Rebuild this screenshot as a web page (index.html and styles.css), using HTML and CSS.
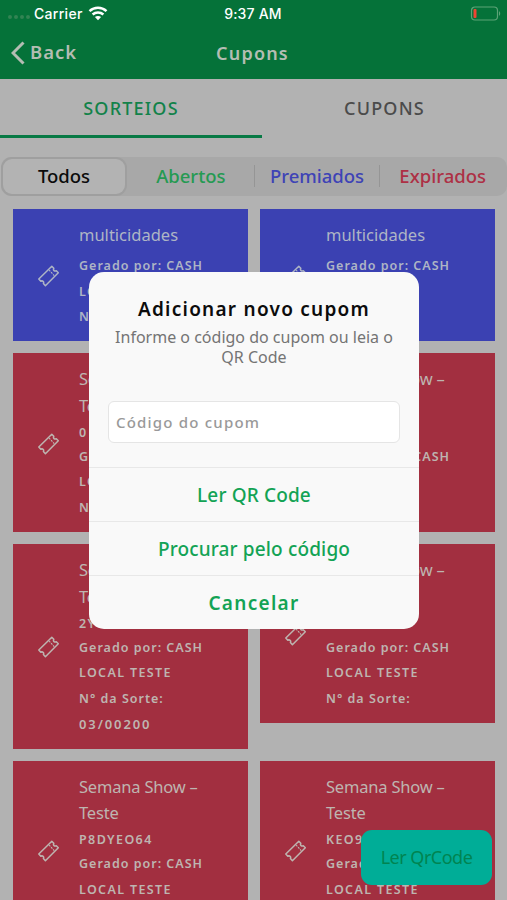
FILE: index.html
```
<!DOCTYPE html>
<html lang="pt-BR">
<head>
  <meta charset="UTF-8">
  <meta name="viewport" content="width=device-width, initial-scale=1.0">
  <title>Cupons</title>
  <link rel="stylesheet" href="styles.css">
</head>
<body>
  <svg class="symbols" width="0" height="0">
    <symbol id="ticket" viewBox="0 0 22 22">
      <path d="M14.8 1.2l2 2.1c-1 1.8.8 3.5 2.5 2.4l2 2.1L8.4 20.8l-2-2.2c.9-1.8-.9-3.5-2.6-2.3l-2-2.3z" />
      <path class="perforation" d="M12 5l5.2 5.6" />
    </symbol>
  </svg>

  <div class="app">
    <header class="header">
      <div class="status-bar">
        <div class="carrier">
          <span class="signal"><i></i><i></i><i></i><i></i></span>
          <span class="carrier-name">Carrier</span>
          <svg class="wifi" width="20" height="15" viewBox="0 0 20 15">
            <path d="M1.5 5.2c4.9-4.5 12.1-4.5 17 0M4.6 8.5c3.1-2.8 7.7-2.8 10.8 0" />
            <path class="wifi-dot" d="M10 14.3l-3.1-3.2c1.8-1.6 4.4-1.6 6.2 0z" />
          </svg>
        </div>
        <span class="time">9:37 AM</span>
        <svg class="battery" width="31" height="15" viewBox="0 0 31 15">
          <rect class="battery-case" x="1.5" y="1" width="26" height="13" rx="3.5" />
          <rect class="battery-level" x="3.5" y="3" width="3" height="9" rx="1" />
          <path class="battery-tip" d="M29 5.2c1.6.6 1.6 4 0 4.6z" />
        </svg>
      </div>
      <div class="nav-bar">
        <div class="back">
          <svg width="14" height="24" viewBox="0 0 14 24"><path d="M12.5 1.5L2 12l10.5 10.5" /></svg>
          <span>Back</span>
        </div>
        <h1 class="nav-title">Cupons</h1>
      </div>
    </header>

    <nav class="tabs">
      <div class="tab active"><span>SORTEIOS</span></div>
      <div class="tab"><span>CUPONS</span></div>
    </nav>

    <div class="segments">
      <div class="segment selected"><span>Todos</span></div>
      <div class="segment open"><span>Abertos</span></div>
      <div class="segment awarded"><span>Premiados</span></div>
      <div class="segment expired"><span>Expirados</span></div>
    </div>

    <main class="coupons">
      <div class="coupon blue">
        <svg class="ticket"><use href="#ticket" /></svg>
        <div class="info">
          <h2>multicidades</h2>
          <p>Gerado por: CASH</p><p class="place">LOCAL TESTE</p><p>N° da Sorte:</p>
        </div>
      </div>
      <div class="coupon blue">
        <svg class="ticket"><use href="#ticket" /></svg>
        <div class="info">
          <h2>multicidades</h2>
          <p>Gerado por: CASH</p><p class="place">LOCAL TESTE</p><p>N° da Sorte:</p>
        </div>
      </div>

      <div class="coupon">
        <svg class="ticket"><use href="#ticket" /></svg>
        <div class="info">
          <h2>Semana Show –<br>Teste</h2>
          <p class="code">0</p>
          <p>Gerado por: CASH</p><p class="place">LOCAL TESTE</p><p>N° da Sorte:</p>
        </div>
      </div>
      <div class="coupon">
        <svg class="ticket"><use href="#ticket" /></svg>
        <div class="info">
          <h2>Semana Show –<br>Teste</h2>
          <p class="code">0</p>
          <p>Gerado por: CASH</p><p class="place">LOCAL TESTE</p><p>N° da Sorte:</p>
        </div>
      </div>

      <div class="coupon">
        <svg class="ticket"><use href="#ticket" /></svg>
        <div class="info">
          <h2>Semana Show –<br>Teste</h2>
          <p class="code">2Y</p>
          <p>Gerado por: CASH</p><p class="place">LOCAL TESTE</p><p>N° da Sorte:</p><p class="number">03/00200</p>
        </div>
      </div>
      <div class="coupon">
        <svg class="ticket"><use href="#ticket" /></svg>
        <div class="info">
          <h2>Semana Show –<br>Teste</h2>
          <p class="code">0</p>
          <p>Gerado por: CASH</p><p class="place">LOCAL TESTE</p><p>N° da Sorte:</p>
        </div>
      </div>

      <div class="coupon">
        <svg class="ticket"><use href="#ticket" /></svg>
        <div class="info">
          <h2>Semana Show –<br>Teste</h2>
          <p class="code">P8DYEO64</p>
          <p>Gerado por: CASH</p><p class="place">LOCAL TESTE</p>
        </div>
      </div>
      <div class="coupon">
        <svg class="ticket"><use href="#ticket" /></svg>
        <div class="info">
          <h2>Semana Show –<br>Teste</h2>
          <p class="code">KEO9</p>
          <p>Gerado por: CASH</p><p class="place">LOCAL TESTE</p>
        </div>
      </div>
    </main>

    <button class="scan-button"><span>Ler QrCode</span></button>

    <div class="dialog">
      <div class="dialog-body">
        <h2 class="dialog-title">Adicionar novo cupom</h2>
        <p class="dialog-text"><span>Informe o código do cupom ou leia o</span><br>QR Code</p>
        <div class="code-input"><span>Código do cupom</span></div>
      </div>
      <button class="action"><span>Ler QR Code</span></button>
      <button class="action"><span>Procurar pelo código</span></button>
      <button class="action cancel"><span>Cancelar</span></button>
    </div>
  </div>
</body>
</html>
```
FILE: styles.css
```
* {
  box-sizing: border-box;
}
body {
  margin: 0;
  font-family: 'Noto Sans', 'Open Sans', sans-serif;
  background: #b2b2b2;
}
h1, h2, p {
  margin: 0;
}
button {
  border: none;
  font-family: inherit;
  padding: 0;
}
span {
  white-space: nowrap;
}
.symbols {
  position: absolute;
}
.app {
  position: relative;
  width: 507px;
  height: 900px;
  overflow: hidden;
}

/* header */
.header {
  height: 79px;
  background: #057239;
}
.status-bar {
  display: grid;
  grid-template-columns: 1fr auto 1fr;
  align-items: center;
  height: 26px;
  padding: 0 6px 0 8px;
  color: #fff;
  font-family: Inter, sans-serif;
  font-size: 14px;
  font-weight: 500;
}
.carrier {
  display: flex;
  align-items: center;
}
.signal {
  display: flex;
  gap: 2px;
  width: 26px;
  padding-top: 7px;
}
.signal i {
  width: 4px;
  height: 4px;
  border-radius: 50%;
  background: #328453;
}
.carrier-name {
  width: 54px;
  letter-spacing: 0.3px;
}
.time {
  margin-right: 3px;
  letter-spacing: 0.2px;
}
.wifi {
  fill: none;
  stroke: #fff;
  stroke-width: 2.5;
}
.wifi .wifi-dot {
  fill: #fff;
  stroke: none;
}
.battery {
  justify-self: end;
  fill: none;
}
.battery-case {
  stroke: #5da377;
  stroke-width: 1.2;
}
.battery-level {
  fill: #f04432;
}
.battery-tip {
  fill: #5da377;
}
.nav-bar {
  display: grid;
  grid-template-columns: 1fr auto 1fr;
  align-items: center;
  height: 53px;
  padding: 0 13px 0 11px;
  color: #b4bdb3;
}
.back {
  display: flex;
  align-items: center;
  gap: 5px;
  font-size: 18.5px;
  font-weight: 600;
  letter-spacing: 1px;
}
.back span {
  padding-bottom: 3px;
}
.back svg {
  fill: none;
  stroke: #b4bdb3;
  stroke-width: 3;
}
.nav-title {
  font-size: 18px;
  font-weight: 600;
  letter-spacing: 1.2px;
}

/* tabs */
.tabs {
  display: flex;
  height: 59px;
}
.tab {
  display: flex;
  justify-content: center;
  align-items: center;
  width: 245px;
  padding-bottom: 2px;
  color: #4b4b4b;
  font-size: 18px;
  font-weight: 500;
  letter-spacing: 1.2px;
}
.tab.active {
  width: 262px;
  color: #12824a;
  border-bottom: 3px solid #087a45;
  padding-bottom: 0;
  padding-top: 1px;
}

/* status filter */
.segments {
  display: flex;
  height: 39px;
  margin: 19px 0 13px 1px;
  padding: 2px;
  border-radius: 10px;
  background: #a8a8a8;
}
.segment {
  display: flex;
  justify-content: center;
  align-items: center;
  flex: 1;
  padding-bottom: 2px;
  font-size: 18.5px;
  font-weight: 500;
}
.selected {
  flex: 0 0 122px;
  margin-right: 3px;
  color: #0b0b0b;
  background: #b3b3b3;
  border-radius: 9px;
  box-shadow: 0 0 0 2px #9f9f9f;
}
.open {
  color: #259a52;
}
.awarded {
  color: #3e43b6;
}
.expired {
  color: #ad3045;
}
.awarded::before,
.expired::before {
  content: '';
  width: 1px;
  height: 22px;
  margin-right: auto;
  background: #959595;
}
.awarded::after,
.expired::after {
  content: '';
  margin-left: auto;
}

/* coupon list */
.coupons {
  display: grid;
  grid-template-columns: 235px 235px;
  align-items: start;
  gap: 12px;
  padding-left: 13px;
}
.coupon {
  display: flex;
  align-items: center;
  min-height: 179px;
  padding: 13px 0 11px 24px;
  color: #beb5b0;
  background: #a22f40;
}
.coupon.blue {
  min-height: 132px;
  color: #aeb5c5;
  background: #3b41b2;
}
.ticket {
  flex: none;
  width: 22px;
  height: 22px;
  margin-right: 20px;
  fill: none;
  stroke: currentColor;
  stroke-width: 1.5;
  stroke-linejoin: round;
}
.perforation {
  stroke-width: 1.1;
  stroke-dasharray: 2 1;
}
.info {
  align-self: flex-start;
}
.info h2 {
  font-size: 16.5px;
  font-weight: 400;
  line-height: 26.8px;
  letter-spacing: -0.2px;
}
.blue h2 {
  margin-bottom: 4px;
  line-height: 26px;
  padding-bottom: 1px;
  letter-spacing: 0;
}
.info p {
  font-size: 12.5px;
  font-weight: 600;
  line-height: 25.7px;
  letter-spacing: 1px;
  white-space: nowrap;
}
.info .code {
  padding-top: 2px;
  line-height: 22px;
  letter-spacing: 1.4px;
}
.info .place {
  letter-spacing: 1.35px;
}
.info .number {
  font-size: 13px;
  letter-spacing: 1.9px;
}

.scan-button {
  position: absolute;
  left: 361px;
  top: 830px;
  width: 131px;
  height: 55px;
  padding-bottom: 2px;
  border-radius: 11px;
  background: #00ad97;
  color: #008451;
  font-size: 18px;
  letter-spacing: -0.5px;
}

/* dialog */
.dialog {
  position: absolute;
  left: 89px;
  top: 272px;
  width: 330px;
  height: 357px;
  border-radius: 15px;
  background: #f9f9f9;
  text-align: center;
}
.dialog-body {
  height: 195px;
  padding: 24px 19px 0;
}
.dialog-title {
  color: #0c0c0c;
  font-size: 19px;
  font-weight: 600;
  line-height: 27px;
  letter-spacing: 1.25px;
}
.dialog-text {
  margin-top: 5px;
  color: #747474;
  font-size: 16px;
  line-height: 19.5px;
}
.code-input {
  display: flex;
  align-items: center;
  height: 42px;
  margin-top: 34px;
  padding-left: 7px;
  border: 1px solid #e5e5e5;
  border-radius: 6px;
  background: #fff;
  color: #999;
  font-size: 15px;
  font-weight: 500;
  letter-spacing: 1.2px;
}
.action {
  display: block;
  width: 100%;
  height: 54px;
  border-top: 1px solid #e8e8e8;
  background: none;
  color: #13a355;
  font-size: 19px;
  font-weight: 500;
  letter-spacing: 0.15px;
}
.cancel {
  font-weight: 600;
  letter-spacing: 1.3px;
}
```
